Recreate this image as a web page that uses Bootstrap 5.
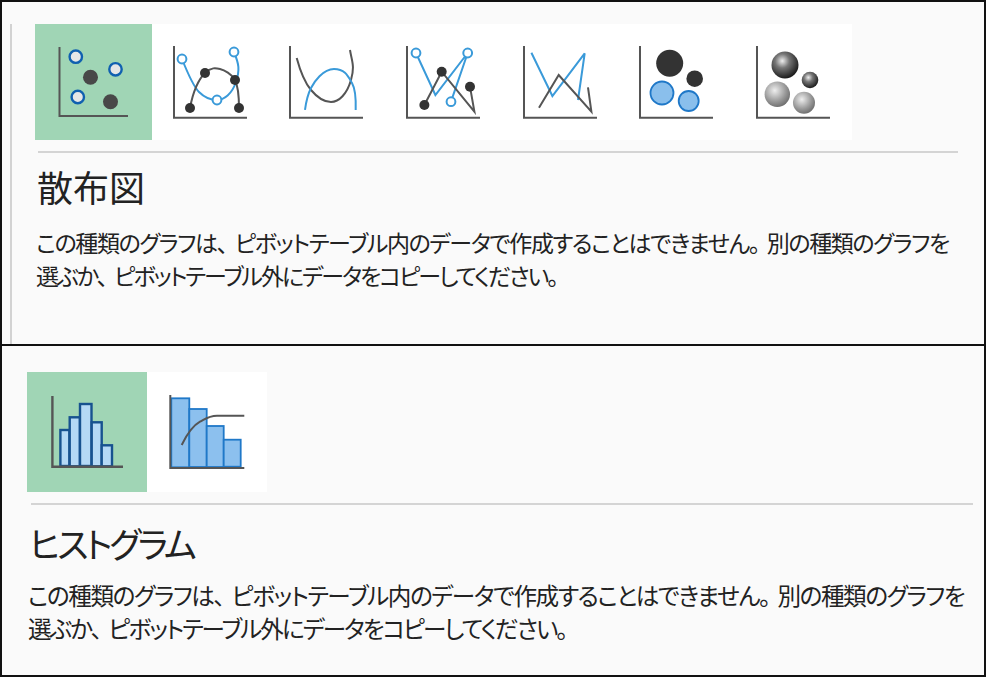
<!DOCTYPE html>
<html lang="ja">
<head>
<meta charset="utf-8">
<title>グラフの種類</title>
<link href="https://cdn.jsdelivr.net/npm/bootstrap@5.3.0/dist/css/bootstrap.min.css" rel="stylesheet">
<style>
html,body{margin:0;width:986px;height:677px;overflow:hidden;background:#fafafa}
body{font-family:"Noto Sans CJK JP","Noto Sans",sans-serif;color:#222;font-feature-settings:"palt"}
.shot-frame{border:solid #111;border-width:2px 2px 2px 2px;background:#fafafa}
.shot-a{height:346px;padding:22px 0 0 8px}
.shot-b{height:331px;border-top-width:0;padding:26px 10px 0 25px}
.shot-a-inner{border-left:2px solid #d2d2d2;padding-left:23px;height:100%;width:964px}
.strip{background:#fff;width:fit-content}
.tile-a{width:116.7px;height:116px;display:block}
.tile-b{width:120px;height:120px;display:block}
.tile-on{background:#a0d5b5}
.tile-a>*,.tile-b>*{filter:blur(.35px)}
.rule-a{height:2px;background:#d4d4d4;margin:11px 0 0 3px;width:920px}
.rule-b{height:2px;background:#d4d4d4;margin:11px 0 0 4px;width:942px}
.cap-a{font-size:36px;line-height:44px;margin:11px 0 0 2px;font-weight:400}
.cap-b{font-size:35px;line-height:44px;margin:16px 0 0 2px;font-weight:400;letter-spacing:-3.2px}
.desc-a{font-size:23px;line-height:33px;margin:18px 0 0 1px;white-space:nowrap;letter-spacing:-1.39px}
.desc-b{font-size:23.6px;line-height:33px;margin:14px 0 0 1px;white-space:nowrap;letter-spacing:-1.42px}
.tight-a{letter-spacing:-2.05px}
.tight-b{letter-spacing:-1.95px}
.pt{margin-right:8px}
.ax{fill:none;stroke:#555;stroke-width:2}
.bl{fill:none;stroke:#3a9ad9;stroke-width:2}
.dk{fill:none;stroke:#555;stroke-width:2}
.op{fill:#fff;stroke:#3a9ad9;stroke-width:2}
.do{fill:#333}
</style>
</head>
<body>
<svg width="0" height="0" class="d-block position-absolute">
<defs>
<radialGradient id="gd" cx=".4" cy=".35" r=".65"><stop offset="0" stop-color="#eee"/><stop offset=".4" stop-color="#777"/><stop offset="1" stop-color="#1c1c1c"/></radialGradient>
<radialGradient id="gl" cx=".4" cy=".35" r=".72"><stop offset="0" stop-color="#eee"/><stop offset=".6" stop-color="#999"/><stop offset="1" stop-color="#666"/></radialGradient>
</defs>
</svg>

<section class="shot-frame shot-a">
  <div class="shot-a-inner">
    <div class="strip d-flex">
      <svg class="tile-a tile-on" viewBox="0 0 116.7 116">
        <path class="ax" d="M24.5 23V92H93"/>
        <g fill="#e6e6e6" stroke="#1060b0" stroke-width="2.4">
          <circle cx="40.8" cy="32.7" r="6.2"/><circle cx="80.5" cy="45.3" r="6.2"/><circle cx="42.8" cy="73" r="6.2"/>
        </g>
        <circle cx="55.5" cy="53.3" r="7.5" fill="#484848"/><circle cx="75.5" cy="77.7" r="7.5" fill="#484848"/>
      </svg>
      <svg class="tile-a" viewBox="0 0 116.7 116">
        <path class="ax" d="M22 22V93.7H95"/>
        <path class="bl" d="M30 35C36 50 42 63 47 68S58 76 65 76 80 70 84 58 87 40 82 28"/>
        <path class="dk" d="M38 84C41 68 47 55 53 49S64 44 68 45 80 50 83 56 87 72 87 84"/>
        <circle class="do" cx="38" cy="84" r="5"/><circle class="do" cx="53" cy="49" r="5"/><circle class="do" cx="83" cy="56" r="5"/><circle class="do" cx="87" cy="84" r="5"/>
        <circle class="op" cx="30" cy="35" r="4.4"/><circle class="op" cx="65" cy="76" r="4.4"/><circle class="op" cx="82" cy="28" r="4.4"/>
      </svg>
      <svg class="tile-a" viewBox="0 0 116.7 116">
        <path class="ax" d="M22 22V93.7H95"/>
        <path class="dk" d="M28.7 34C33 50 38 60 43 66S55 78 63 78 79 70 83 56 84 38 82 26"/>
        <path class="bl" d="M37 86C38 78 40 70 43 64S55 45 66 45 80 52 84 59 88 76 87.7 86"/>
      </svg>
      <svg class="tile-a" viewBox="0 0 116.7 116">
        <path class="ax" d="M22 22V93.7H95"/>
        <path class="bl" d="M31 29L50.4 71 82.7 29 66 77.7"/>
        <path class="dk" d="M39.4 81L56.7 47.7 89.4 87.7 85 62.7"/>
        <circle class="do" cx="39.4" cy="81" r="5"/><circle class="do" cx="56.7" cy="47.7" r="5"/><circle class="do" cx="85" cy="62.7" r="5"/>
        <circle class="op" cx="31" cy="29" r="4.4"/><circle class="op" cx="82.7" cy="29" r="4.4"/><circle class="op" cx="66" cy="77.7" r="4.4"/>
      </svg>
      <svg class="tile-a" viewBox="0 0 116.7 116">
        <path class="ax" d="M22 22V93.7H95"/>
        <path class="bl" d="M29.4 28.7L50.4 72 82.7 29.3 76 76"/>
        <path class="dk" d="M37 83.7L56.7 51 89.4 87.7 86 63.3"/>
      </svg>
      <svg class="tile-a" viewBox="0 0 116.7 116">
        <path class="ax" d="M22 22V93.7H95"/>
        <circle cx="51.7" cy="39.3" r="13.5" fill="#333"/><circle cx="76.7" cy="54.7" r="8.3" fill="#333"/>
        <g fill="#8abfec" stroke="#1f78c8" stroke-width="1.8"><circle cx="44" cy="69" r="11.5"/><circle cx="70.7" cy="77" r="10"/></g>
      </svg>
      <svg class="tile-a" viewBox="0 0 116.7 116">
        <path class="ax" d="M22 22V93.7H95"/>
        <circle cx="50" cy="41" r="13.5" fill="url(#gd)"/><circle cx="75" cy="56" r="8.3" fill="url(#gd)"/>
        <circle cx="42.3" cy="70.3" r="12.7" fill="url(#gl)"/><circle cx="69" cy="78.7" r="11" fill="url(#gl)"/>
      </svg>
    </div>
    <div class="rule-a"></div>
    <h2 class="cap-a">散布図</h2>
    <p class="desc-a">この種類のグラフは<span class="pt">、</span>ピボットテーブル内のデータで作成することはできません<span class="pt">。</span>別の種類のグラフを<br><span class="tight-a">選ぶか<span class="pt">、</span>ピボットテーブル外にデータをコピーしてください。</span></p>
  </div>
</section>

<section class="shot-frame shot-b">
  <div class="strip d-flex">
    <svg class="tile-b tile-on" viewBox="0 0 120 120">
      <g fill="#b5d9f5" stroke="#17528f" stroke-width="2.4">
        <rect x="33.4" y="58" width="9" height="36"/><rect x="42.7" y="45.3" width="10.2" height="49"/><rect x="53" y="32" width="11.5" height="62"/><rect x="64.7" y="50.3" width="10" height="44"/><rect x="74.7" y="73.3" width="10.3" height="21"/>
      </g>
      <path d="M25.4 24V94.7H96" fill="none" stroke="#555" stroke-width="2.4"/>
    </svg>
    <svg class="tile-b" viewBox="0 0 120 120">
      <g fill="#8cc0ee" stroke="#1f78c8" stroke-width="1.8">
        <rect x="24.3" y="26.3" width="18" height="69"/><rect x="42.3" y="37" width="17.4" height="58"/><rect x="59.7" y="54" width="17" height="41"/><rect x="76.7" y="67.7" width="17" height="27"/>
      </g>
      <path class="ax" d="M23.3 23V96H97.3"/>
      <path class="dk" d="M34.7 73C41 60 47 53 53 49.7S62 43.7 70 43.7H97.3"/>
    </svg>
  </div>
  <div class="rule-b"></div>
  <h2 class="cap-b">ヒストグラム</h2>
  <p class="desc-b">この種類のグラフは<span class="pt">、</span>ピボットテーブル内のデータで作成することはできません<span class="pt">。</span>別の種類のグラフを<br><span class="tight-b">選ぶか<span class="pt">、</span>ピボットテーブル外にデータをコピーしてください。</span></p>
</section>
<script src="https://cdn.jsdelivr.net/npm/bootstrap@5.3.0/dist/js/bootstrap.bundle.min.js"></script>
</body>
</html>
